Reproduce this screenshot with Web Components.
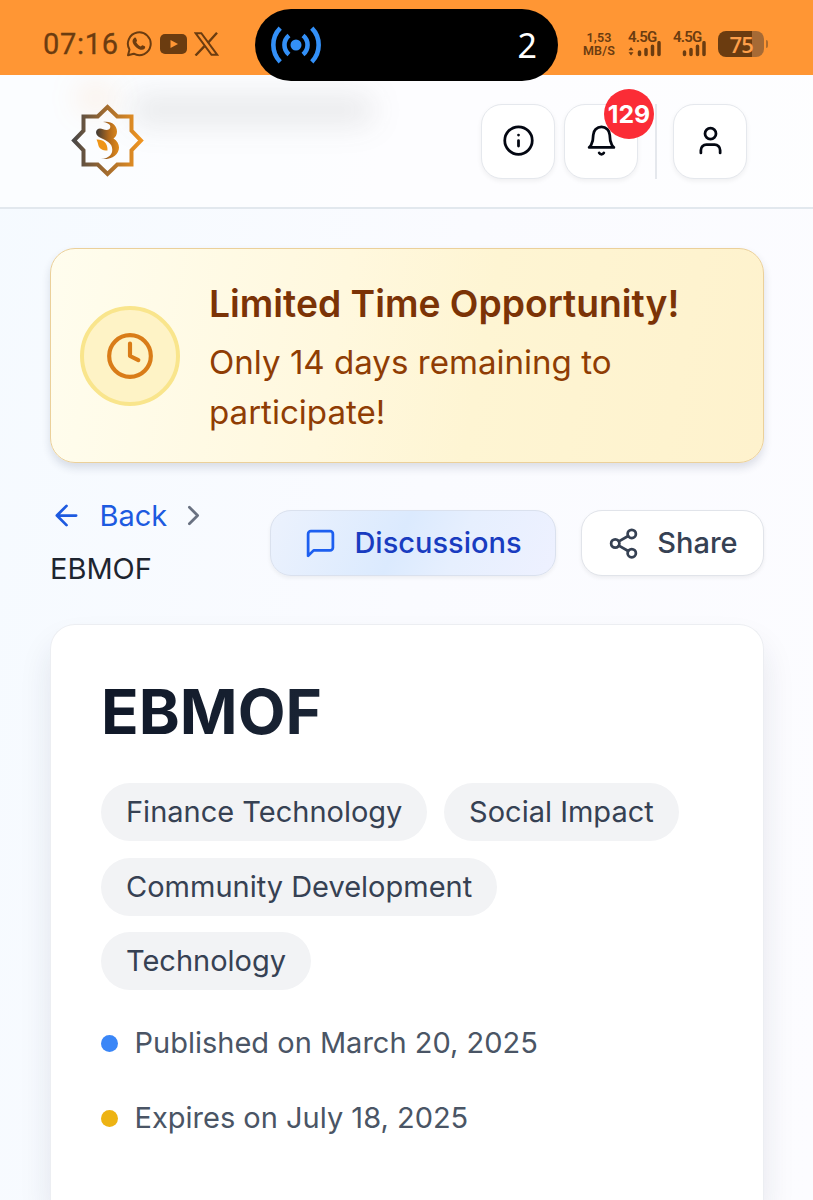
<!DOCTYPE html>
<html lang="en">
<head>
<meta charset="UTF-8">
<meta name="viewport" content="width=device-width, initial-scale=1">
<title>EBMOF</title>
<style>
  body {
    display: flex;
    flex-direction: column;
    margin: 0;
    height: 1200px;
    overflow: hidden;
    font-family: Inter, "Liberation Sans", sans-serif;
    font-size: 29px;
    color: #1e2939;
    background: linear-gradient(100deg, #f5faff 0%, #fafbff 50%, #fcfcff 100%);
  }

  main {
    display: flex;
    flex: 1;
    flex-direction: column;
    padding: 39px 49px 0 50px;
  }
</style>
</head>
<body>
<status-bar></status-bar>
<app-header count="129"></app-header>
<main>
  <time-alert>
    <span slot="title">Limited Time Opportunity!</span>
    <span>Only 14 days remaining to participate!</span>
  </time-alert>
  <page-toolbar current="EBMOF"></page-toolbar>
  <project-card>
    <span slot="title">EBMOF</span>
    <tag-chip>Finance Technology</tag-chip>
    <tag-chip>Social Impact</tag-chip>
    <tag-chip>Community Development</tag-chip>
    <tag-chip>Technology</tag-chip>
    <date-line slot="dates" style="--dot: #3a86f7">Published on March 20, 2025</date-line>
    <date-line slot="dates" style="--dot: #edb313">Expires on July 18, 2025</date-line>
  </project-card>
</main>

<script>
const icons = {
  info: `<circle cx="12" cy="12" r="10"/><path d="M12 16v-4M12 8h.01"/>`,
  bell: `<path d="M6 8a6 6 0 0 1 12 0c0 7 3 9 3 9H3s3-2 3-9"/><path d="M10.3 21a1.94 1.94 0 0 0 3.4 0"/>`,
  user: `<path d="M19 21v-2a4 4 0 0 0-4-4H9a4 4 0 0 0-4 4v2"/><circle cx="12" cy="7" r="4"/>`,
  clock: `<circle cx="12" cy="12" r="10"/><path d="M12 6v6l4 2"/>`,
  back: `<path d="m12 19-7-7 7-7M19 12H5"/>`,
  chevron: `<path d="m9 18 6-6-6-6"/>`,
  message: `<path d="M21 15a2 2 0 0 1-2 2H7l-4 4V5a2 2 0 0 1 2-2h14a2 2 0 0 1 2 2z"/>`,
  share: `<circle cx="18" cy="5" r="3"/><circle cx="6" cy="12" r="3"/><circle cx="18" cy="19" r="3"/><path d="m8.590 13.510 6.830 3.980M15.410 6.510l-6.820 3.980"/>`,
};

class UiIcon extends HTMLElement {
  constructor() {
    super();
    this.shadowDOM = this.attachShadow({ mode: "open" });
  }

  connectedCallback() {
    const size = this.getAttribute("size") || 33;
    this.shadowDOM.innerHTML = `
      <style>
        :host {
          display: inline-flex;
          flex: none;
        }

        svg {
          fill: none;
          stroke: currentColor;
          stroke-width: 2;
          stroke-linecap: round;
          stroke-linejoin: round;
        }
      </style>
      <svg width="${size}" height="${size}" viewBox="0 0 24 24">${icons[this.getAttribute("name")]}</svg>
    `;
  }
}

class StatusBar extends HTMLElement {
  constructor() {
    super();
    this.shadowDOM = this.attachShadow({ mode: "open" });
  }

  connectedCallback() {
    this.shadowDOM.innerHTML = `
      <style>
        :host {
          display: flex;
          align-items: center;
          justify-content: space-between;
          box-sizing: border-box;
          position: relative;
          z-index: 2;
          height: 75px;
          padding: 13px 45px 0 43px;
          background: #ff9634;
          color: #6b3c10;
          font-family: Roboto, sans-serif;
        }

        .left, .right {
          display: flex;
          align-items: center;
        }

        .time {
          width: 83px;
          font-size: 29px;
          line-height: 30px;
          letter-spacing: 0.7px;
          -webkit-text-stroke: 0.3px;
        }

        .left svg + svg {
          margin-left: 7.500px;
        }

        .speed {
          width: 34px;
          margin-right: 12px;
          font-size: 12.500px;
          font-weight: 600;
          line-height: 13px;
          letter-spacing: 0.2px;
          text-align: center;
          white-space: nowrap;
        }

        .net {
          display: flex;
          flex-direction: column;
          align-items: flex-end;
          width: 33px;
          height: 28px;
          margin-right: 12px;
          font-size: 15px;
          font-weight: 600;
          letter-spacing: -0.8px;
          line-height: 14px;
        }

        .net span {
          align-self: flex-start;
        }

        .net svg {
          margin-top: -3px;
        }

        .battery {
          display: flex;
          align-items: center;
          justify-content: flex-end;
          box-sizing: border-box;
          width: 46px;
          height: 26px;
          padding-right: 11px;
          border-radius: 8px;
          background: linear-gradient(90deg, #6b3c10 75%, #a66a35 75%);
          color: #ffa04a;
          font-family: "Open Sans", sans-serif;
          font-size: 22px;
          font-weight: 600;
          letter-spacing: -0.8px;
        }

        .tip {
          width: 2px;
          height: 8px;
          margin-left: 2px;
          border-radius: 0 2px 2px 0;
          background: #b06c2c;
        }

        .island {
          position: absolute;
          top: 9px;
          left: 255px;
          display: flex;
          align-items: center;
          justify-content: space-between;
          box-sizing: border-box;
          width: 303px;
          height: 71.500px;
          padding: 0 21px 0 15px;
          border-radius: 36px;
          background: #000;
          color: #fff;
          font-family: "Noto Sans", sans-serif;
          font-size: 34px;
        }
      </style>
      <div class="left">
        <span class="time">07:16</span>
        <svg width="26" height="26" viewBox="0 0 26 26">
          <path d="M2 24.200 3.500 18.600A11.400 11.400 0 1 1 7.700 22.700Z" fill="none" stroke="currentColor" stroke-width="2" stroke-linejoin="round"/>
          <path d="M8.200 7c.7-.7 1.500-.6 1.900.3l.9 2.100c.2.600-.9 1.500-.8 1.900 1 2 2.500 3.300 4.500 4.100.500.100 1.300-1.400 1.800-1.200l2.300 1.100c.7.400.4 1.900-.5 2.700-1.400 1.200-3.400 1-5.700-.1-2.700-1.300-4.700-3.600-5.700-5.900C6.200 10 6.500 8.300 8.200 7Z" fill="currentColor"/>
        </svg>
        <svg width="27" height="20" viewBox="0 0 27 20">
          <rect width="27" height="20" rx="5" fill="currentColor"/>
          <path d="M10.500 6v8l7.500-4z" fill="#ff9634"/>
        </svg>
        <svg width="25" height="24" viewBox="0 0 25 24">
          <path d="M1.500 1.200h5.800l16 21.600h-5.800z" fill="none" stroke="currentColor" stroke-width="2"/>
          <path d="M23 .8 13.800 11M10.500 14.200 1.500 23.500" fill="none" stroke="currentColor" stroke-width="2.400"/>
        </svg>
      </div>
      <div class="right">
        <div class="speed">1,53<br>MB/S</div>
        <div class="net">
          <span>4.5G</span>
          <svg width="33" height="16" viewBox="0 0 33 16">
            <path d="M3 6 5.500 9.200H.5zM3 14.500l2.500-3.200H.5z" fill="currentColor"/>
            <path d="M11.500 11v2.500M18 8.500v5M24.500 5.200v8.300M31 1.700v11.800" stroke="currentColor" stroke-width="3.500" stroke-linecap="round"/>
          </svg>
        </div>
        <div class="net">
          <span>4.5G</span>
          <svg width="33" height="16" viewBox="0 0 33 16">
            <path d="M11.500 11v2.500M18 8.500v5M24.500 5.200v8.300M31 1.700v11.800" stroke="currentColor" stroke-width="3.500" stroke-linecap="round"/>
          </svg>
        </div>
        <div class="battery">75</div>
        <div class="tip"></div>
      </div>
      <div class="island">
        <svg width="52" height="38" viewBox="0 0 52 38" fill="none" stroke="#3390f8" stroke-width="4.600">
          <circle cx="26" cy="19" r="5.500" fill="#3390f8" stroke="none"/>
          <path d="M19 9.500a12.200 12.200 0 0 0 0 19M33 9.500a12.200 12.200 0 0 1 0 19M10.200 2.200a24 24 0 0 0 0 33.600M41.800 2.200a24 24 0 0 1 0 33.600"/>
        </svg>
        <span>2</span>
      </div>
    `;
  }
}

class IconButton extends HTMLElement {
  constructor() {
    super();
    this.shadowDOM = this.attachShadow({ mode: "open" });
  }

  connectedCallback() {
    const badge = this.getAttribute("badge");
    this.shadowDOM.innerHTML = `
      <style>
        :host {
          display: flex;
          align-items: center;
          justify-content: center;
          position: relative;
          box-sizing: border-box;
          width: 74px;
          height: 75px;
          border: 1.500px solid #e5e8ed;
          border-radius: 21px;
          background: #fff;
          box-shadow: 0 2px 5px rgba(0, 0, 0, 0.06);
          color: #030712;
        }

        ui-icon {
          margin-top: -1px;
        }

        .badge {
          position: absolute;
          top: -16px;
          right: -17px;
          width: 50px;
          height: 50px;
          border-radius: 50%;
          background: #fb2c36;
          color: #fff;
          font-size: 24.800px;
          font-weight: 700;
          line-height: 50px;
          text-align: center;
        }
      </style>
      <ui-icon name="${this.getAttribute("icon")}" size="33"></ui-icon>
      ${badge ? `<span class="badge">${badge}</span>` : ""}
    `;
  }
}

class AppHeader extends HTMLElement {
  constructor() {
    super();
    this.shadowDOM = this.attachShadow({ mode: "open" });
  }

  connectedCallback() {
    this.shadowDOM.innerHTML = `
      <style>
        :host {
          display: flex;
          align-items: center;
          justify-content: space-between;
          position: relative;
          box-sizing: border-box;
          height: 134px;
          padding: 0 66px 0 71px;
          border-bottom: 2px solid #e2e8ee;
          background: rgba(255, 255, 255, 0.6);
        }

        /* page content scrolled under the translucent bar */
        .under {
          position: absolute;
          top: 20px;
          left: 130px;
          width: 244px;
          height: 30px;
          border-radius: 14px;
          background: rgba(60, 60, 60, 0.1);
          filter: blur(15px);
        }

        .glow {
          position: absolute;
          top: 6px;
          left: 75px;
          width: 42px;
          height: 34px;
          border-radius: 50%;
          background: rgba(255, 150, 60, 0.1);
          filter: blur(14px);
        }

        .logo {
          position: relative;
          margin-top: -1px;
        }

        nav {
          display: flex;
          align-items: center;
          gap: 9px;
        }

        hr {
          width: 2px;
          height: 75px;
          margin: 0 7px 0 8px;
          border: 0;
          background: #e5e8ed;
        }
      </style>
      <div class="under"></div>
      <div class="glow"></div>
      <svg class="logo" width="73" height="73" viewBox="0 0 73 73">
        <defs>
          <linearGradient id="gold" x1="0" x2="1">
            <stop offset="0" stop-color="#4b4847"/>
            <stop offset=".5" stop-color="#a66d2d"/>
            <stop offset="1" stop-color="#ef9420"/>
          </linearGradient>
          <linearGradient id="curve" x1="0" x2="1">
            <stop offset="0" stop-color="#3d3935"/>
            <stop offset=".55" stop-color="#b0691c"/>
            <stop offset="1" stop-color="#e28c1c"/>
          </linearGradient>
        </defs>
        <path d="M36.500 3 46.300 12.500H60.500V26.700L70 36.500 60.500 46.300V60.500H46.300L36.500 70 26.700 60.500H12.500V46.300L3 36.500 12.500 26.700V12.500H26.700Z" fill="none" stroke="url(#gold)" stroke-width="4"/>
        <path d="M32 18C40 16.500 46 21 46 27.500 46 31 44.500 33 42.500 34.500 46 36.500 48 40 48 43.500 48 50.500 41 56 30 55 38 54.500 42.500 50 41 43.500 40 38 33 35.500 28 33 23.500 30 24.500 24.500 29 24.500 32 24.500 35 27.500 38.500 25 41 22 38 18.500 32 18Z" fill="url(#curve)"/>
        <path d="M25.500 35.500c6-.5 11.500 3 11 11-5.500 0-8.500-2-9.200-5.500C26.800 39 26.500 37.500 25.500 35.500Z" fill="#ee9518"/>
      </svg>
      <nav>
        <icon-button icon="info"></icon-button>
        <icon-button icon="bell" badge="${this.getAttribute("count")}"></icon-button>
        <hr>
        <icon-button icon="user"></icon-button>
      </nav>
    `;
  }
}

class TimeAlert extends HTMLElement {
  constructor() {
    super();
    this.shadowDOM = this.attachShadow({ mode: "open" });
  }

  connectedCallback() {
    this.shadowDOM.innerHTML = `
      <style>
        :host {
          display: flex;
          align-items: center;
          gap: 29px;
          box-sizing: border-box;
          height: 215px;
          padding: 0 29px;
          border: 1.500px solid #ebd09a;
          border-radius: 25px;
          background: linear-gradient(100deg, #fffdee, #fff8de 40%, #fef5d3 60%, #fef2cd);
          box-shadow: 0 5px 9px rgba(30, 40, 80, 0.14);
        }

        .clock {
          display: flex;
          align-items: center;
          justify-content: center;
          flex: none;
          box-sizing: border-box;
          width: 100px;
          height: 100px;
          border: 4px solid #f9e58c;
          border-radius: 50%;
          background: #fef3c6;
          color: #d97c18;
        }

        .text {
          padding-top: 5px;
        }

        h3 {
          margin: 0 0 8px;
          color: #7b3306;
          font-size: 37.250px;
          font-weight: 600;
          line-height: 50px;
          white-space: nowrap;
        }

        p {
          margin: 0;
          color: #8f3d04;
          font-size: 33.100px;
          line-height: 50px;
        }
      </style>
      <div class="clock"><ui-icon name="clock" size="50"></ui-icon></div>
      <div class="text">
        <h3><slot name="title"></slot></h3>
        <p><slot></slot></p>
      </div>
    `;
  }
}

class PillButton extends HTMLElement {
  constructor() {
    super();
    this.shadowDOM = this.attachShadow({ mode: "open" });
  }

  connectedCallback() {
    this.shadowDOM.innerHTML = `
      <style>
        :host {
          display: flex;
          align-items: center;
          justify-content: center;
          gap: 17px;
          box-sizing: border-box;
          height: 66px;
          border: 1.500px solid #e1e4ea;
          border-radius: 21px;
          background: #fff;
          box-shadow: 0 2px 4px rgba(0, 0, 0, 0.06);
          color: #364153;
          font-weight: 500;
        }

        :host([primary]) {
          border-color: #dae1ee;
          background: linear-gradient(115deg, #ecf2fd, #dbeafe 45%, #e6effe 65%, #eef1ff);
          color: #193cc0;
        }

        :host([primary]) ui-icon {
          color: #1d5ff0;
        }

        span {
          padding-bottom: 2px;
        }
      </style>
      <ui-icon name="${this.getAttribute("icon")}" size="33"></ui-icon>
      <span><slot></slot></span>
    `;
  }
}

class PageToolbar extends HTMLElement {
  constructor() {
    super();
    this.shadowDOM = this.attachShadow({ mode: "open" });
  }

  connectedCallback() {
    this.shadowDOM.innerHTML = `
      <style>
        :host {
          display: flex;
          align-items: center;
          height: 106px;
          margin-top: 27px;
        }

        .crumbs {
          width: 220px;
          padding-bottom: 2px;
          line-height: 53px;
        }

        .back {
          display: flex;
          align-items: center;
          color: #1d5ae0;
        }

        .back span {
          margin: 0 10px 0 16.500px;
        }

        .back .sep {
          color: #6a7282;
        }

        .current {
          color: #1e2530;
        }

        .discussions {
          width: 286px;
        }

        .share {
          width: 183px;
          margin-left: auto;
        }
      </style>
      <div class="crumbs">
        <div class="back">
          <ui-icon name="back" size="33"></ui-icon>
          <span>Back</span>
          <ui-icon class="sep" name="chevron" size="33"></ui-icon>
        </div>
        <div class="current">${this.getAttribute("current")}</div>
      </div>
      <pill-button class="discussions" icon="message" primary>Discussions</pill-button>
      <pill-button class="share" icon="share">Share</pill-button>
    `;
  }
}

class TagChip extends HTMLElement {
  constructor() {
    super();
    this.shadowDOM = this.attachShadow({ mode: "open" });
  }

  connectedCallback() {
    this.shadowDOM.innerHTML = `
      <style>
        :host {
          display: block;
          height: 58px;
          padding: 0 25px;
          border-radius: 29px;
          background: #f2f3f5;
          color: #364153;
          line-height: 57px;
          white-space: nowrap;
        }
      </style>
      <slot></slot>
    `;
  }
}

class DateLine extends HTMLElement {
  constructor() {
    super();
    this.shadowDOM = this.attachShadow({ mode: "open" });
  }

  connectedCallback() {
    this.shadowDOM.innerHTML = `
      <style>
        :host {
          display: flex;
          align-items: center;
          gap: 16.500px;
          height: 42px;
          color: #4a5565;
        }

        i {
          width: 17px;
          height: 17px;
          margin-top: 2px;
          border-radius: 50%;
          background: var(--dot);
        }
      </style>
      <i></i>
      <span><slot></slot></span>
    `;
  }
}

class ProjectCard extends HTMLElement {
  constructor() {
    super();
    this.shadowDOM = this.attachShadow({ mode: "open" });
  }

  connectedCallback() {
    this.shadowDOM.innerHTML = `
      <style>
        :host {
          display: block;
          flex: 1;
          box-sizing: border-box;
          margin-top: 28px;
          padding: 49px 50px 0;
          border: 1px solid #eceef2;
          border-bottom: 0;
          border-radius: 25px 25px 0 0;
          background: #fff;
          box-shadow: 0 20px 32px rgba(30, 40, 70, 0.1);
        }

        h1 {
          margin: 0;
          background: linear-gradient(90deg, #101828, #1e2939 50%);
          background-clip: text;
          -webkit-background-clip: text;
          color: transparent;
          font-size: 62.100px;
          font-weight: 700;
          line-height: 76px;
        }

        .tags {
          display: flex;
          flex-wrap: wrap;
          gap: 16.700px;
          margin-top: 33px;
        }

        .dates {
          display: flex;
          flex-direction: column;
          gap: 33px;
          margin-top: 31.500px;
        }
      </style>
      <h1><slot name="title"></slot></h1>
      <div class="tags"><slot></slot></div>
      <div class="dates"><slot name="dates"></slot></div>
    `;
  }
}

customElements.define("ui-icon", UiIcon);
customElements.define("status-bar", StatusBar);
customElements.define("icon-button", IconButton);
customElements.define("app-header", AppHeader);
customElements.define("time-alert", TimeAlert);
customElements.define("pill-button", PillButton);
customElements.define("page-toolbar", PageToolbar);
customElements.define("tag-chip", TagChip);
customElements.define("date-line", DateLine);
customElements.define("project-card", ProjectCard);
</script>
</body>
</html>
